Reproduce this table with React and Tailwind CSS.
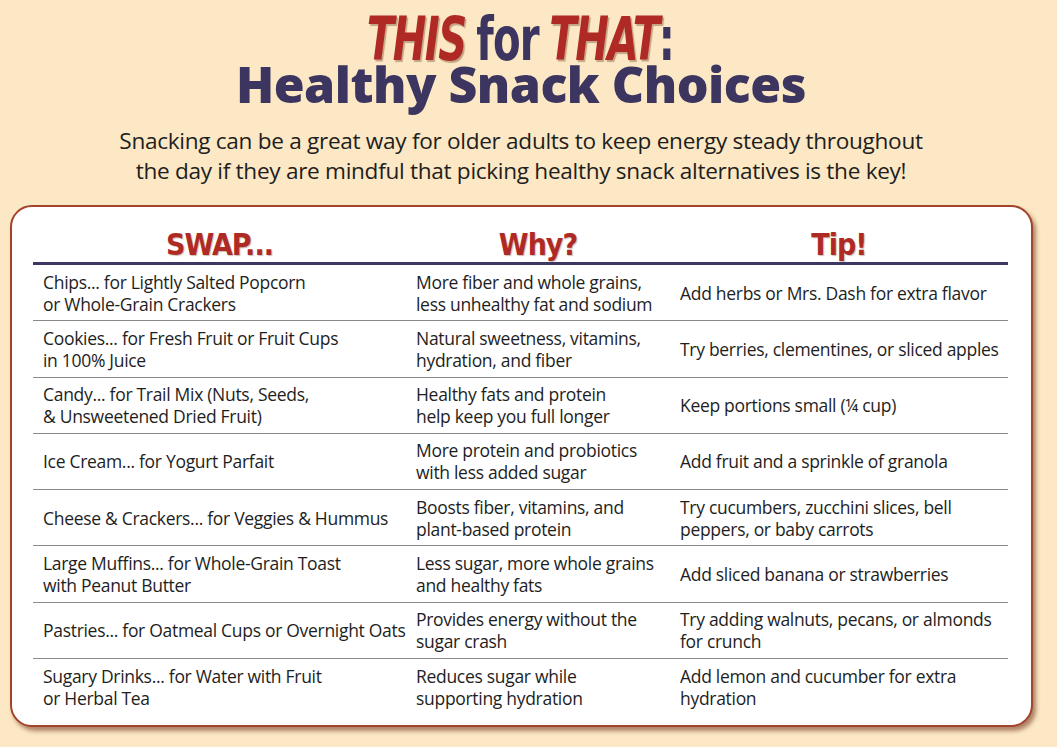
import React from "react";

const rows = [
  ["Chips... for Lightly Salted Popcorn\nor Whole-Grain Crackers", "More fiber and whole grains,\nless unhealthy fat and sodium", "Add herbs or Mrs. Dash for extra flavor"],
  ["Cookies... for Fresh Fruit or Fruit Cups\nin 100% Juice", "Natural sweetness, vitamins,\nhydration, and fiber", "Try berries, clementines, or sliced apples"],
  ["Candy... for Trail Mix (Nuts, Seeds,\n& Unsweetened Dried Fruit)", "Healthy fats and protein\nhelp keep you full longer", "Keep portions small (¼ cup)"],
  ["Ice Cream... for Yogurt Parfait", "More protein and probiotics\nwith less added sugar", "Add fruit and a sprinkle of granola"],
  ["Cheese & Crackers... for Veggies & Hummus", "Boosts fiber, vitamins, and\nplant-based protein", "Try cucumbers, zucchini slices, bell\npeppers, or baby carrots"],
  ["Large Muffins... for Whole-Grain Toast\nwith Peanut Butter", "Less sugar, more whole grains\nand healthy fats", "Add sliced banana or strawberries"],
  ["Pastries... for Oatmeal Cups or Overnight Oats", "Provides energy without the\nsugar crash", "Try adding walnuts, pecans, or almonds\nfor crunch"],
  ["Sugary Drinks... for Water with Fruit\nor Herbal Tea", "Reduces sugar while\nsupporting hydration", "Add lemon and cucumber for extra\nhydration"],
];

const body = { fontFamily: '"Open Sans", "Noto Sans", sans-serif' };
const comic = { fontFamily: '"DejaVu Sans Condensed", "DejaVu Sans", sans-serif' };

function Cell({ text }) {
  return (
    <div className="flex items-center px-[10px] whitespace-pre text-[17.5px] leading-[22px] text-[#1e1e1e] tracking-[-0.3px]" style={body}>
      {text}
    </div>
  );
}

const headCls = "text-center text-[30px] font-bold text-[#b02a25] tracking-[-1px] [text-shadow:1px_1px_1px_rgba(90,40,20,0.3)]";

export default function App() {
  return (
    <div className="w-[1057px] h-[747px] bg-[#fce8c4] overflow-hidden flex flex-col">
      <div className="flex flex-col items-center pr-[15px]">
        <div className="mt-[16px] h-[46px] flex items-end leading-[46px] scale-x-[0.745]" style={comic}>
          <span className="text-[60px] font-bold italic text-[#b02a25] tracking-[-2px] [text-shadow:2px_2px_1px_rgba(90,40,20,0.35)]">THIS</span>
          <span className="text-[60px] font-bold text-[#3b355f] mx-[14px] tracking-[-1px]">for</span>
          <span className="text-[60px] font-bold italic text-[#b02a25] tracking-[-2px] [text-shadow:2px_2px_1px_rgba(90,40,20,0.35)]">THAT</span>
          <span className="text-[60px] font-bold text-[#3b355f]">:</span>
        </div>
        <div className="mt-[5px] h-[34px] text-[50px] font-extrabold leading-[34px] text-[#3b355f] tracking-[-0.5px]" style={body}>
          Healthy Snack Choices
        </div>
        <div className="mt-[25px] text-center text-[22.6px] leading-[30px] text-[#1e1e1e] tracking-[-0.3px]" style={body}>
          Snacking can be a great way for older adults to keep energy steady throughout<br />
          the day if they are mindful that picking healthy snack alternatives is the key!
        </div>
      </div>
      <div className="mt-[19px] ml-[10px] w-[1023px] h-[522px] bg-white border-2 border-[#a2432c] rounded-[22px] shadow-[3px_4px_4px_rgba(110,45,25,0.55)] pl-[21px] pr-[23px] flex flex-col">
        <div className="grid grid-cols-[373px_264px_338px] h-[58px] shrink-0 items-center pt-[15px] border-b-[3px] border-[#3d3763]" style={comic}>
          <div className={headCls}>SWAP...</div>
          <div className={headCls}>Why?</div>
          <div className={headCls}>Tip!</div>
        </div>
        {rows.map((r, i) => (
          <div key={i} className={"grid grid-cols-[373px_264px_338px] h-[56.25px] shrink-0 " + (i < rows.length - 1 ? "border-b border-[#8a8a8a]" : "")}>
            <Cell text={r[0]} />
            <Cell text={r[1]} />
            <Cell text={r[2]} />
          </div>
        ))}
      </div>
    </div>
  );
}
